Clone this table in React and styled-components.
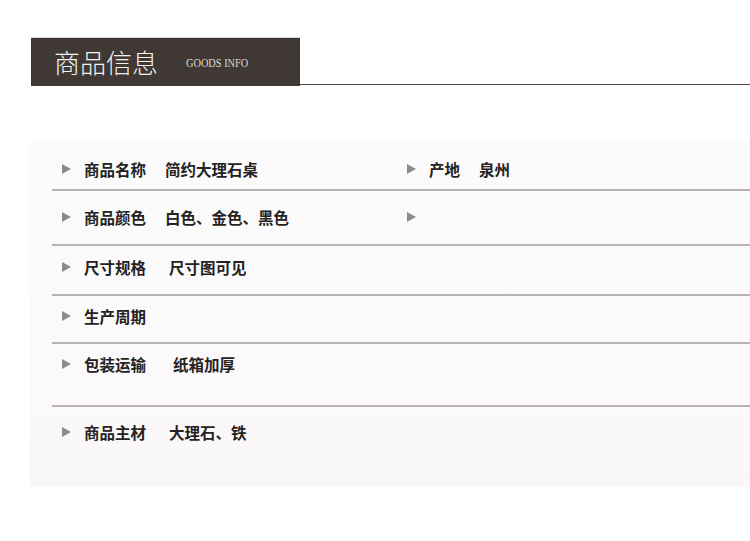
import React from "react";
import styled, { createGlobalStyle } from "styled-components";

const GlobalStyle = createGlobalStyle`
  html, body {
    margin: 0;
    padding: 0;
    background: #ffffff;
  }
  body {
    font-family: "Noto Sans CJK SC", "Noto Sans", sans-serif;
  }
`;

const rows = [
  { h: 49, pt: 19, left: { label: "商品名称", value: "简约大理石桌", gap: 19 }, right: { label: "产地", value: "泉州", gap: 19 } },
  { h: 53, pt: 16, left: { label: "商品颜色", value: "白色、金色、黑色", gap: 19 }, right: { label: "", value: "" } },
  { h: 48, pt: 11, left: { label: "尺寸规格", value: "尺寸图可见", gap: 23 } },
  { h: 46, pt: 10, left: { label: "生产周期", value: "" } },
  { h: 61, pt: 10, left: { label: "包装运输", value: "纸箱加厚", gap: 27 } },
  { h: 80, pt: 15, left: { label: "商品主材", value: "大理石、铁", gap: 23 }, last: true },
];

function Cell({ item }) {
  return (
    <CellBox>
      <Arrow />
      {item.label && <Label>{item.label}</Label>}
      {item.value && <Value $gap={item.gap}>{item.value}</Value>}
    </CellBox>
  );
}

export default function App() {
  return (
    <>
      <GlobalStyle />
      <Page>
        <Header>
          <TitleBox>
            <Title>商品信息</Title>
            <SubTitle>GOODS INFO</SubTitle>
          </TitleBox>
          <HeaderLine />
        </Header>

        <Panel>
          {rows.map((r, i) => (
            <Row key={i} $h={r.h} $pt={r.pt} $last={r.last}>
              <Cell item={r.left} />
              {r.right && <Cell item={r.right} />}
            </Row>
          ))}
        </Panel>
      </Page>
    </>
  );
}

const Page = styled.div`
  width: 750px;
  height: 541px;
  overflow: hidden;
  padding-top: 37px;
  box-sizing: border-box;
`;

const Header = styled.div`
  display: flex;
  padding-left: 31px;
  height: 49px;
`;

const TitleBox = styled.div`
  width: 269px;
  background: #3f3834;
  display: flex;
  align-items: center;
  padding-left: 23px;
  box-sizing: border-box;
  border-top: 1px solid #d8d4d2;
`;

const Title = styled.span`
  color: #f3f1ef;
  font-size: 26px;
  font-weight: 300;
  line-height: 1;
`;

const SubTitle = styled.span`
  color: #dcd8d5;
  font-family: "Liberation Serif", serif;
  font-size: 12px;
  margin-left: 28px;
  margin-top: 2px;
  display: inline-block;
  transform: scaleX(0.86);
  transform-origin: left center;
`;

const HeaderLine = styled.div`
  flex: 1;
  align-self: flex-end;
  border-bottom: 1px solid #4f4a47;
  margin-bottom: 1px;
`;

const Panel = styled.div`
  margin-top: 54px;
  margin-left: 29px;
  height: 347px;
  background: linear-gradient(180deg, #fcfbfb 0%, #fbfafa 45%, #faf7f9 100%);
  padding-left: 23px;
`;

const Row = styled.div`
  display: grid;
  grid-template-columns: 345px 1fr;
  padding-top: ${(p) => p.$pt}px;
  height: ${(p) => p.$h - p.$pt}px;
  border-bottom: ${(p) => (p.$last ? "none" : "2px solid #b8b2b3")};
`;

const CellBox = styled.div`
  display: flex;
  align-items: center;
  height: 20px;
  padding-left: 10px;
`;

const Arrow = styled.span`
  width: 0;
  height: 0;
  border-top: 5px solid transparent;
  border-bottom: 5px solid transparent;
  border-left: 9px solid #8f898a;
  margin-right: 13px;
`;

const Label = styled.span`
  font-size: 15.5px;
  font-weight: 700;
  color: #252222;
  line-height: 20px;
  white-space: nowrap;
`;

const Value = styled(Label)`
  margin-left: ${(p) => p.$gap || 19}px;
`;
